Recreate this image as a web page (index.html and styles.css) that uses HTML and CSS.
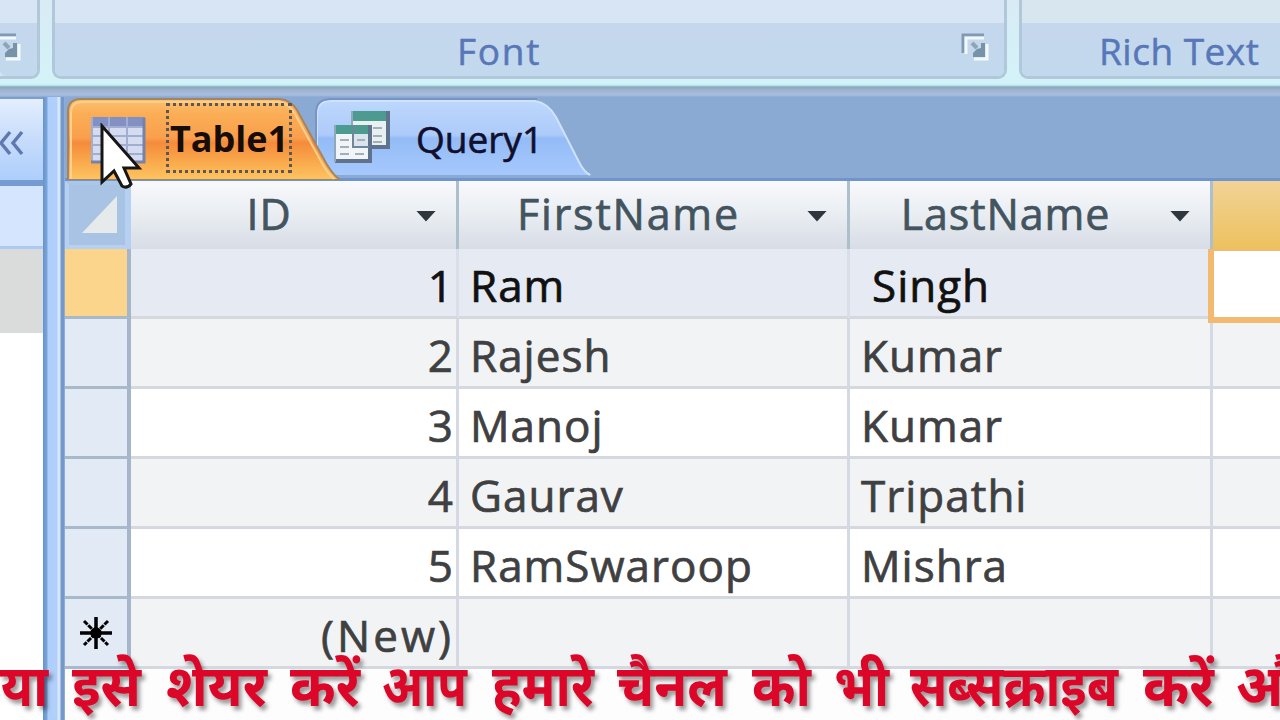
FILE: index.html
```html
<!DOCTYPE html>
<html lang="en">
<head>
  <meta charset="UTF-8">
  <meta name="viewport" content="width=device-width, initial-scale=1.0">
  <title>Table1</title>
  <link rel="stylesheet" href="styles.css">
</head>
<body>
  <div class="ribbon">
    <div class="group group-first">
      <div class="group-label">
        <svg class="launcher" width="30" height="30" viewBox="0 0 30 30">
          <path d="M2 20V2h21" fill="none" stroke="#8199b2" stroke-width="3"/>
          <path d="M5 21V5h18" fill="none" stroke="#f0f8fd" stroke-width="3"/>
          <path d="M11 10l5 5" stroke="#8fa5b6" stroke-width="4"/>
          <path d="M24 10v14H12v-4l4-4 4-1v-5z" fill="#7893a8"/>
          <path d="M26 11v15H13" fill="none" stroke="#f3faff" stroke-width="3"/>
        </svg>
      </div>
    </div>
    <div class="group group-font">
      <div class="group-label">
        <span class="font-name">Font</span>
        <svg class="launcher" width="30" height="30" viewBox="0 0 30 30">
          <path d="M2 20V2h21" fill="none" stroke="#8199b2" stroke-width="3"/>
          <path d="M5 21V5h18" fill="none" stroke="#f0f8fd" stroke-width="3"/>
          <path d="M11 10l5 5" stroke="#8fa5b6" stroke-width="4"/>
          <path d="M24 10v14H12v-4l4-4 4-1v-5z" fill="#7893a8"/>
          <path d="M26 11v15H13" fill="none" stroke="#f3faff" stroke-width="3"/>
        </svg>
      </div>
    </div>
    <div class="group group-rich">
      <div class="group-label"><span class="rich-name">Rich Text</span></div>
    </div>
  </div>

  <div class="workspace">
    <div class="nav-pane">
      <div class="nav-header">
        <svg width="26" height="26" viewBox="0 0 26 26" fill="none" stroke="#6078b0" stroke-width="3.5">
          <path d="M10 2L1 13l9 11M22 2l-9 11 9 11"/>
        </svg>
      </div>
      <div class="nav-search"></div>
      <div class="nav-item"></div>
    </div>
    <div class="splitter"></div>

    <div class="document">
      <div class="tabs">
        <div class="tab tab-active">
          <svg class="tab-shape" width="276" height="83" viewBox="0 0 276 83">
            <defs>
              <linearGradient id="orange" x1="0" y1="0" x2="0" y2="1">
                <stop offset="0" stop-color="#fdc06f"/>
                <stop offset="0.18" stop-color="#fbae56"/>
                <stop offset="0.48" stop-color="#f99f4d"/>
                <stop offset="0.54" stop-color="#f48b3c"/>
                <stop offset="0.75" stop-color="#f9a64a"/>
                <stop offset="1" stop-color="#fec562"/>
              </linearGradient>
            </defs>
            <path d="M2 83V15Q2 2 15 2H213Q225 3 231 13L260 66Q267 78 274 83z" fill="url(#orange)" stroke="#a58561" stroke-width="2"/>
            <path d="M5 82V16Q5 5 16 5H213Q223 6 229 17L257 68Q263 78 268 82" fill="none" stroke="#fdcf88" stroke-width="2"/>
          </svg>
          <svg class="tab-icon" width="56" height="48" viewBox="0 0 56 48">
            <path d="M0 0h54v46H0z" fill="#d5dcef"/>
            <path d="M0 0h54v10H0z" fill="#8390c4"/>
            <path d="M1 0v46M18 0v46M36 0v46M0 10h54M0 19h54M0 28h54M0 37h54" stroke="#a2aed1" stroke-width="2"/>
            <path d="M53 1v44H0" fill="none" stroke="#7482ac" stroke-width="3"/>
          </svg>
          <span class="tab-title">Table1</span>
        </div>
        <div class="tab tab-query">
          <svg class="tab-shape" width="280" height="80" viewBox="0 0 280 80">
            <defs>
              <linearGradient id="blue" x1="0" y1="0" x2="0" y2="1">
                <stop offset="0" stop-color="#bdd7fc"/>
                <stop offset="0.46" stop-color="#adcbfa"/>
                <stop offset="0.5" stop-color="#94bbf6"/>
                <stop offset="1" stop-color="#a6c9fd"/>
              </linearGradient>
            </defs>
            <path d="M2 78V18Q2 4 15 4H220Q233 6 241 20L264 65Q269 75 277 78z" fill="url(#blue)"/>
            <path d="M2 78V18Q2 4 15 4H220Q233 6 241 20L264 65Q269 75 275 78" fill="none" stroke="#cfe1fb" stroke-width="2"/>
            <path d="M1 78V16Q1 2 16 2H222" fill="none" stroke="#7695c6" stroke-width="2"/>
          </svg>
          <svg class="tab-icon" width="58" height="54" viewBox="0 0 58 54">
            <path d="M19 1h37v37H19z" fill="#e9f0f1"/>
            <path d="M19 1h37v10H19z" fill="#4d9a91"/>
            <path d="M55 1v36H19" fill="none" stroke="#60738d" stroke-width="4"/>
            <path d="M19 38V1" stroke="#91a8b9" stroke-width="2"/>
            <path d="M40 18h9M40 26h9M40 32h9" stroke="#a3afba" stroke-width="2"/>
            <path d="M2 15h36v37H2z" fill="#f2f5f7"/>
            <path d="M2 15h36v9H2z" fill="#4d9a91"/>
            <path d="M21 24h15v13H21z" fill="#dbe4ea"/>
            <path d="M37 15v36H2" fill="none" stroke="#60738d" stroke-width="4"/>
            <path d="M2 52V15" stroke="#91a8b9" stroke-width="2"/>
            <path d="M7 30h9M7 37h9M7 44h9M24 30h8M22 44h9" stroke="#a3afba" stroke-width="2"/>
            <path d="M20 15v22h16" fill="none" stroke="#71869a" stroke-width="2"/>
          </svg>
          <span class="tab-title">Query1</span>
        </div>
      </div>

      <div class="sheet">
        <div class="row header-row">
          <div class="corner">
            <svg width="36" height="38" viewBox="0 0 36 38"><path d="M0 37L35 0v37z" fill="#e6eaeb"/></svg>
          </div>
          <div class="head"><span>ID</span><i class="arrow"></i></div>
          <div class="head first-name"><span>FirstName</span><i class="arrow"></i></div>
          <div class="head"><span>LastName</span><i class="arrow"></i></div>
          <div class="head-selected"></div>
        </div>
        <div class="row current">
          <div class="selector"></div>
          <div class="cell number">1</div>
          <div class="cell">Ram</div>
          <div class="cell indent">Singh</div>
          <div class="cell edit"></div>
        </div>
        <div class="row alt">
          <div class="selector"></div>
          <div class="cell number">2</div>
          <div class="cell">Rajesh</div>
          <div class="cell">Kumar</div>
          <div class="cell"></div>
        </div>
        <div class="row">
          <div class="selector"></div>
          <div class="cell number">3</div>
          <div class="cell">Manoj</div>
          <div class="cell">Kumar</div>
          <div class="cell"></div>
        </div>
        <div class="row alt">
          <div class="selector"></div>
          <div class="cell number">4</div>
          <div class="cell">Gaurav</div>
          <div class="cell">Tripathi</div>
          <div class="cell"></div>
        </div>
        <div class="row">
          <div class="selector"></div>
          <div class="cell number">5</div>
          <div class="cell">RamSwaroop</div>
          <div class="cell">Mishra</div>
          <div class="cell"></div>
        </div>
        <div class="row alt new-row">
          <div class="selector">
            <svg width="34" height="34" viewBox="0 0 34 34" stroke="#000" stroke-width="3.5">
              <path d="M17 1v32M1 17h32"/>
              <path d="M5 5l24 24M29 5L5 29" stroke-width="3" stroke-dasharray="5 1"/>
              <circle cx="17" cy="17" r="4"/>
            </svg>
          </div>
          <div class="cell number">(New)</div>
          <div class="cell"></div>
          <div class="cell"></div>
          <div class="cell"></div>
        </div>
      </div>
    </div>
  </div>

  <svg class="pointer" width="46" height="70" viewBox="0 0 46 70">
    <path d="M3 3v56l12-11 8 15q5 3 9-2l-7-16h15z" fill="#fff" stroke="#161616" stroke-width="3"/>
  </svg>

  <!-- scrolling message over the sheet -->
  <svg class="ticker" lang="hi" width="1280" height="80" viewBox="0 0 1280 80">
    <text x="48" y="66" text-anchor="end" textLength="120" lengthAdjust="spacingAndGlyphs">कृपया</text>
    <text x="72" y="66" textLength="69" lengthAdjust="spacingAndGlyphs">इसे</text>
    <text x="166" y="66" textLength="101" lengthAdjust="spacingAndGlyphs">शेयर</text>
    <text x="290" y="66" textLength="70" lengthAdjust="spacingAndGlyphs">करें</text>
    <text x="382" y="66" textLength="85" lengthAdjust="spacingAndGlyphs">आप</text>
    <text x="492" y="66" textLength="102" lengthAdjust="spacingAndGlyphs">हमारे</text>
    <text x="617" y="66" textLength="110" lengthAdjust="spacingAndGlyphs">चैनल</text>
    <text x="752" y="66" textLength="59" lengthAdjust="spacingAndGlyphs">को</text>
    <text x="834" y="66" textLength="55" lengthAdjust="spacingAndGlyphs">भी</text>
    <text x="910" y="66" textLength="208" lengthAdjust="spacingAndGlyphs">सब्सक्राइब</text>
    <text x="1143" y="66" textLength="71" lengthAdjust="spacingAndGlyphs">करें</text>
    <text x="1236" y="66" textLength="88" lengthAdjust="spacingAndGlyphs">और</text>
  </svg>
</body>
</html>
```

FILE: styles.css
```css
* {
  box-sizing: border-box;
}

body {
  margin: 0;
  width: 1280px;
  height: 720px;
  overflow: hidden;
  position: relative;
  font-family: 'Open Sans', 'Noto Sans', sans-serif;
  background: #8aa9d3;
}

/* ribbon */
.ribbon {
  display: flex;
  gap: 12px;
  height: 97px;
  background: linear-gradient(#d9ebf5 0, #d3f3f8 83px, #c5eef2 85px, #8ba9bd 87px, #a2b6d2 91px, #a9bfe0 95px, #8aa9d3 97px);
}

.group {
  height: 79px;
  border: 3px solid #b0c8da;
  border-top: none;
  border-radius: 0 0 9px 9px;
  background: #d7e5f4;
  flex: none;
  display: flex;
  flex-direction: column;
  justify-content: flex-end;
}

.group-first {
  width: 40px;
  border-left: none;
  border-radius: 0 0 9px 0;
}

.group-font {
  width: 955px;
}

.group-rich {
  width: 320px;
  background: #d7e6ef;
}

.group-label {
  height: 53px;
  display: flex;
  align-items: center;
  justify-content: flex-end;
  border-radius: 0 0 6px 6px;
  background: linear-gradient(#c5d7ed, #c2d9ed);
  color: #5877b8;
  font-size: 37px;
  -webkit-text-stroke: 0.5px;
}

.launcher {
  flex: none;
  margin: 0 13px 4px 0;
}

.group-first .launcher {
  margin-right: 14px;
}

.font-name {
  flex: 1;
  padding: 1px 0 0 402px;
  letter-spacing: 1.7px;
}

.rich-name {
  flex: 1;
  padding: 1px 0 0 77px;
  letter-spacing: 0.5px;
}

/* left pane */
.workspace {
  display: flex;
  height: 623px;
}

.nav-pane {
  width: 43px;
  background: #fff;
}

.nav-header {
  height: 83px;
  padding-top: 31px;
  border-top: 2px solid #7f9fce;
  background: linear-gradient(#e4eefe, #c7dcfb 50%, #adcefb);
}

.nav-search {
  height: 69px;
  border-top: 6px solid #759bd1;
  border-bottom: 3px solid #abc9f2;
  background: #d5e5fd;
}

.nav-item {
  height: 84px;
  background: #dadcdb;
}

.splitter {
  width: 22px;
  background: linear-gradient(90deg, #6693cb 0, #7ba5da 4px, #aecffb 5px, #b1d0fb 14px, #dce9fb 15px, #d4e4fa 17px, #7598cb 18px, #7598cb 21px, #a8c1dd 22px);
}

.document {
  width: 1215px;
  display: flex;
  flex-direction: column;
}

/* document tabs */
.tabs {
  display: flex;
  flex: none;
  height: 84px;
  border-bottom: 3px solid #7095cd;
}

.tab {
  position: relative;
  display: flex;
  flex: none;
  height: 84px;
}

.tab-shape {
  position: absolute;
  left: 0;
  top: 0;
}

.tab-icon,
.tab-title {
  position: relative;
}

.tab-active {
  width: 250px;
  z-index: 1;
}

.tab-active .tab-shape {
  left: 1px;
}

.tab-active .tab-icon {
  margin: 20px 0 0 26px;
}

.tab-active .tab-title {
  width: 126px;
  height: 70px;
  margin: 6px 0 0 19px;
  padding-left: 1px;
  border: 3px dotted #5b5755;
  font-size: 36px;
  font-weight: 700;
  line-height: 66px;
  color: #160c08;
}

.tab-query .tab-icon {
  margin: 13px 0 0 18px;
}

.tab-query .tab-title {
  margin-left: 25px;
  font-size: 37px;
  line-height: 84px;
  color: #10102e;
  -webkit-text-stroke: 0.6px;
}

/* datasheet */
.sheet {
  flex: 1;
  background: #fdfdfe;
}

.row {
  display: grid;
  grid-template-columns: 66px 328px 391px 363px 67px;
  grid-template-rows: 70px;
  height: 70px;
  background: #fff;
}

.alt {
  background: #f2f3f4;
}

.current {
  background: #e6eaf3;
}

.header-row {
  height: 68px;
  grid-template-rows: 68px;
  background: linear-gradient(#f8f9fb, #e9edf2 50%, #d7dce6);
}

.corner {
  padding: 11px 0 0 13px;
  border: 4px solid #b5d0f3;
  border-right-width: 6px;
  border-top-color: #abc6e7;
  background: #a8c3e3;
}

.head {
  display: flex;
  align-items: center;
  border-right: 3px solid #aebfcc;
  color: #44545f;
  font-size: 43px;
  letter-spacing: 0.9px;
  -webkit-text-stroke: 0.7px;
}

.first-name {
  letter-spacing: 1.8px;
}

.head span {
  flex: 1;
  text-align: center;
  line-height: 60px;
  padding-bottom: 3px;
}

.arrow {
  width: 20px;
  height: 11px;
  margin: 2px 20px 0 9px;
  background: #30363d;
  clip-path: polygon(0 0, 100% 0, 50% 100%);
}

.head-selected {
  background: linear-gradient(#f1d397, #edc15e);
}

.selector {
  background: #e2eaf5;
  border-right: 4px solid #a5b5ca;
  border-bottom: 3px solid #a9b9c9;
  display: flex;
  align-items: center;
  justify-content: center;
}

.current .selector {
  background: #fad58b;
}

.cell {
  height: 70px;
  border-right: 3px solid #d4d9e3;
  border-bottom: 3px solid #d5d8de;
  padding-left: 11px;
  font-size: 44px;
  line-height: 73px;
  letter-spacing: 1px;
  color: #3f4042;
  white-space: nowrap;
  -webkit-text-stroke: 0.7px;
}

.cell:last-child {
  border-right: none;
}

.current .cell {
  color: #111;
  border-right-color: #d9dee8;
}

.number {
  text-align: right;
  padding-right: 2px;
}

.new-row .number {
  letter-spacing: 3px;
}

.current .indent {
  padding-left: 22px;
}

.current .edit {
  height: 74px;
  margin: 0 0 0 -5px;
  background: #fff;
  border: 6px solid #f2ba70;
  border-right: none;
  border-top-width: 2px;
  z-index: 1;
}

/* things on top of the window */
.pointer {
  position: absolute;
  left: 99px;
  top: 123px;
  z-index: 2;
}

.ticker {
  position: absolute;
  left: 0;
  top: 640px;
  font-family: 'Noto Sans Devanagari', 'Lohit Devanagari', 'Noto Sans', sans-serif;
  font-size: 57px;
  font-weight: bold;
  fill: #dc0628;
  filter: drop-shadow(3px 4px 2px rgba(0, 0, 0, 0.4));
}
```
